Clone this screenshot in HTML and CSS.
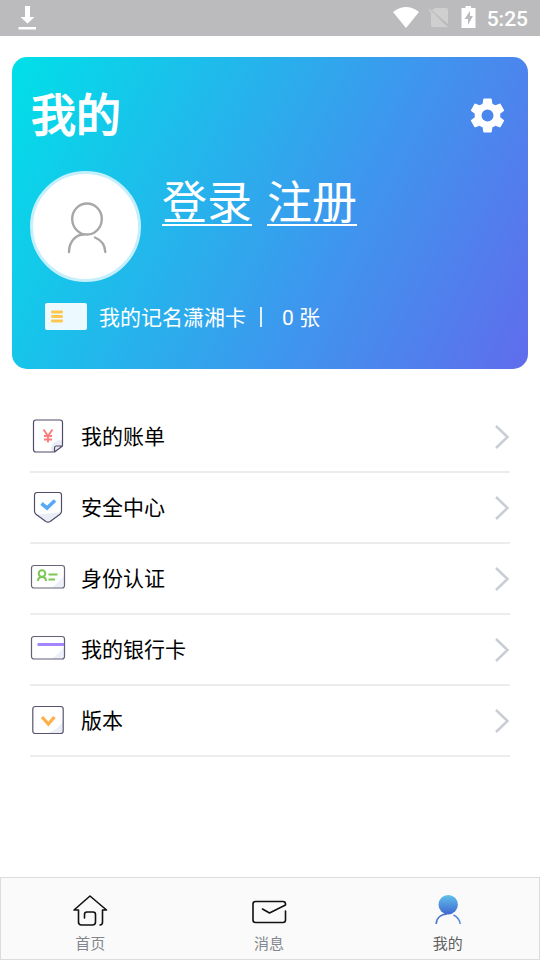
FILE: index.html
```html
<!DOCTYPE html>
<html lang="zh-CN">
<head>
<meta charset="utf-8">
<title>我的</title>
<link rel="stylesheet" href="styles.css">
</head>
<body>
<div class="screen">
  <header class="status">
    <svg class="status-download" width="20" height="26" viewBox="0 0 20 26"><path d="M7 1h5v11h4.500L9.500 18.500 2.500 12H7zM.5 22h17.500v2.500H.5z" fill="#fff"/></svg>
    <div class="status-right">
      <svg width="84" height="26" viewBox="0 0 84 26">
        <path d="M0 7Q13-3 26 7L13 23z" fill="#fff"/>
        <path d="M42 3h11a2 2 0 0 1 2 2v14L39 5.500zM38 7l15 15H40a2 2 0 0 1-2-2z" fill="#cfcfd0"/>
        <path d="M36 4.500l18 18" stroke="#d0d0d1" stroke-width="1.500"/>
        <path d="M72.500 1h5.500v2h4.500v20H68.500V3h4z" fill="#fff"/>
        <path d="M77 6l-5.500 8h3.500v6l5-9h-3z" fill="#bbbbbd"/>
      </svg>
      <span class="clock">5:25</span>
    </div>
  </header>

  <section class="card">
    <div class="card-head">
      <h1>我的</h1>
      <svg class="gear" width="41" height="41" viewBox="0 0 24 24"><path fill="#fff" d="M19.430 12.980c.04-.32.07-.64.07-.98s-.03-.66-.07-.98l2.110-1.650c.19-.15.24-.42.12-.64l-2-3.460c-.12-.22-.39-.3-.61-.22l-2.490 1c-.52-.4-1.080-.73-1.690-.98l-.38-2.650C14.460 2.180 14.250 2 14 2h-4c-.25 0-.46.18-.49.42l-.38 2.650c-.61.25-1.170.59-1.690.98l-2.490-1c-.23-.09-.49 0-.61.22l-2 3.460c-.13.22-.07.49.12.64l2.110 1.650c-.04.32-.07.65-.07.98s.03.66.07.98l-2.110 1.650c-.19.15-.24.42-.12.64l2 3.460c.12.22.39.3.61.22l2.490-1c.52.4 1.080.73 1.690.98l.38 2.650c.03.24.24.42.49.42h4c.25 0 .46-.18.49-.42l.38-2.650c.61-.25 1.170-.59 1.690-.98l2.490 1c.23.09.49 0 .61-.22l2-3.460c.12-.22.07-.49-.12-.64zM12 15.500a3.500 3.500 0 1 1 0-7 3.500 3.500 0 0 1 0 7z"/></svg>
    </div>
    <div class="profile">
      <div class="avatar">
        <svg width="40" height="52" viewBox="0 0 40 52" fill="none" stroke="#a7a7a7" stroke-width="2.400" stroke-linecap="round"><ellipse cx="20" cy="17" rx="14.800" ry="15.500"/><path d="M2 50C2 39.500 9 32.500 17 32.500M28 35.500C34 38 38 43 38.300 50"/></svg>
      </div>
      <div class="links"><a href="#">登录</a><a href="#">注册</a></div>
    </div>
    <div class="tickets">
      <svg width="42" height="27" viewBox="0 0 42 27"><rect width="42" height="27" rx="2" fill="#ecfaff"/><path d="M7.300 9h9.400M7.300 13.500h9.400M7.300 18h9.400" stroke="#ffc751" stroke-width="2.800" stroke-linecap="round"/></svg>
      <span class="ticket-name">我的记名潇湘卡</span><span class="bar"></span><span class="count">0 张</span>
    </div>
  </section>

  <ul class="menu">
    <li>
      <svg class="icon" width="36" height="36" viewBox="0 0 36 36" fill="none"><path d="M33 22a10 10 0 0 0-12 12h5l7-6z" fill="#e9edf6"/><path d="M32.500 27.500V4.500a2.500 2.500 0 0 0-2.500-2.500H6a2.500 2.500 0 0 0-2.500 2.500v27A2.500 2.500 0 0 0 6 34h18.500l8-6h-6a2 2 0 0 0-2 2v4" stroke="#514d69" stroke-width="1.200" stroke-linejoin="round"/><path d="M13.500 11.500l4.500 6.500 4.500-6.500M18 18v6.500M14 18h8M14 21.500h8" stroke="#fb7d7d" stroke-width="1.900"/></svg>
      <span>我的账单</span>
      <svg class="arrow" width="16" height="26" viewBox="0 0 16 26"><path d="M2 2l11.500 11L2 24" fill="none" stroke="#c9cdd4" stroke-width="2.500"/></svg>
    </li>
    <li>
      <svg class="icon" width="36" height="36" viewBox="0 0 36 36" fill="none"><path d="M5 26l27-3-3 4-9 5h-4z" fill="#e9edf6"/><path d="M7 3.500h22a2.500 2.500 0 0 1 2.500 2.500V22q0 2-1.500 3.200l-9.500 7q-2.500 2-5 0L6 25.200q-1.500-1.200-1.500-3.200V6A2.500 2.500 0 0 1 7 3.500z" stroke="#514d69" stroke-width="1.200"/><path d="M11.500 14.500l5.500 4.500 8-7.500" stroke="#57a9f6" stroke-width="3.600"/></svg>
      <span>安全中心</span>
      <svg class="arrow" width="16" height="26" viewBox="0 0 16 26"><path d="M2 2l11.500 11L2 24" fill="none" stroke="#c9cdd4" stroke-width="2.500"/></svg>
    </li>
    <li>
      <svg class="icon" width="36" height="36" viewBox="0 0 36 36" fill="none"><path d="M22 28L34 16v12z" fill="#edf0f8"/><rect x="1.500" y="5.500" width="33" height="22.500" rx="2.500" stroke="#686579" stroke-width="1.200"/><g stroke="#7cc653" stroke-width="2"><circle cx="12" cy="13.500" r="3.300"/><path d="M8 21q0-4 4-4t4 4M18.500 14.500h9M18.500 19.500h6.500"/></g></svg>
      <span>身份认证</span>
      <svg class="arrow" width="16" height="26" viewBox="0 0 16 26"><path d="M2 2l11.500 11L2 24" fill="none" stroke="#c9cdd4" stroke-width="2.500"/></svg>
    </li>
    <li>
      <svg class="icon" width="36" height="36" viewBox="0 0 36 36" fill="none"><path d="M22 28L34 17v11z" fill="#edf0f8"/><rect x="1.500" y="5.500" width="33" height="22.500" rx="2.500" stroke="#625f76" stroke-width="1.200"/><path d="M7.500 13.500H34" stroke="#a285ff" stroke-width="3"/></svg>
      <span>我的银行卡</span>
      <svg class="arrow" width="16" height="26" viewBox="0 0 16 26"><path d="M2 2l11.500 11L2 24" fill="none" stroke="#c9cdd4" stroke-width="2.500"/></svg>
    </li>
    <li>
      <svg class="icon" width="36" height="36" viewBox="0 0 36 36" fill="none"><path d="M18 31q10-3 15-12v12z" fill="#e9edf6"/><rect x="2.800" y="4.500" width="30.400" height="27" rx="2.500" stroke="#58546c" stroke-width="1.200"/><path d="M12 15l6.300 7 6.200-7" stroke="#ffb047" stroke-width="3.300"/></svg>
      <span>版本</span>
      <svg class="arrow" width="16" height="26" viewBox="0 0 16 26"><path d="M2 2l11.500 11L2 24" fill="none" stroke="#c9cdd4" stroke-width="2.500"/></svg>
    </li>
  </ul>

  <nav class="tabs">
    <div class="tab">
      <svg width="36" height="36" viewBox="0 0 36 36" fill="none" stroke="#111" stroke-width="1.600" stroke-linejoin="round" stroke-linecap="round"><path d="M28 32q2.500 0 2.500-3V17H34.500L18 3 2 17h4.500v12q0 3 3 3h11q3 0 3-3V21.500q0-2.500-2.500-2.500h-6q-2.500 0-2.500 2.500V25"/></svg>
      <span>首页</span>
    </div>
    <div class="tab">
      <svg width="36" height="36" viewBox="0 0 36 36" fill="none" stroke="#111" stroke-width="1.600" stroke-linejoin="round" stroke-linecap="round"><path d="M11.500 16l7 4L34.500 12V11q0-2.500-2.500-2.500H4.500Q2 8.500 2 11v16q0 2.500 2.500 2.500H32q2.500 0 2.500-2.500v-9"/></svg>
      <span>消息</span>
    </div>
    <div class="tab active">
      <svg width="36" height="36" viewBox="0 0 36 36" fill="none"><defs><linearGradient id="person" x1="0" y1="0" x2="0" y2="1"><stop offset="0" stop-color="#5fc1ec"/><stop offset="1" stop-color="#4167d0"/></linearGradient></defs><circle cx="18.200" cy="11.700" r="9.700" fill="url(#person)"/><path d="M6.200 31C6.200 25 11 21 17 21" stroke="#4a73d2" stroke-width="1.500"/><path d="M23.500 22q6 3 6.700 9" stroke="#528bdc" stroke-width="1.500"/></svg>
      <span>我的</span>
    </div>
  </nav>
</div>
</body>
</html>
```

FILE: styles.css
```css
* { box-sizing: border-box; }

body {
  margin: 0;
  background: #fff;
  color: #000;
  font-family: Roboto, "Noto Sans CJK SC", sans-serif;
}

svg { display: block; flex: none; }

.screen {
  display: flex;
  flex-direction: column;
  height: 960px;
  overflow: hidden;
}

.status {
  display: flex;
  justify-content: space-between;
  height: 36px;
  padding: 5px 12px 0 18px;
  background: #bbbbbd;
  color: #fff;
}

.status-right { display: flex; gap: 10px; }

.clock {
  font-size: 21px;
  font-weight: 500;
  line-height: 28px;
}

.card {
  height: 312px;
  margin: 21px 12px 0;
  padding: 24px 20px 0 18px;
  border-radius: 15px;
  background: linear-gradient(116deg, #00e0e8 0%, #3e96ee 62%, #606cec 100%);
  color: #fff;
}

.card-head {
  display: flex;
  justify-content: space-between;
  height: 90px;
}

h1 {
  margin: 3px 0 0 1px;
  font-size: 45px;
  font-weight: 400;
  line-height: 65px;
  -webkit-text-stroke: 1.5px #fff;
}

.gear { margin-top: 14px; }

.profile { display: flex; gap: 21px; }

.avatar {
  display: flex;
  align-items: center;
  justify-content: center;
  width: 111px;
  height: 111px;
  padding: 3px 0 0 2px;
  border: 3px solid #c5effb;
  border-radius: 50%;
  background: #fff;
}

.links {
  display: flex;
  gap: 15px;
  height: 65px;
  font-size: 45px;
  line-height: 65px;
}

.links a {
  color: #fff;
  text-decoration: underline;
  text-decoration-thickness: 2px;
  text-decoration-skip-ink: none;
  text-underline-offset: 5px;
}

.tickets {
  display: flex;
  align-items: center;
  height: 32px;
  margin: 18px 0 0 15px;
  font-size: 21px;
}

.ticket-name { margin-left: 12px; }

.bar {
  width: 2px;
  height: 20px;
  margin: 2px 20px 0 14px;
  background: #e4f1fc;
}

.menu {
  margin: 33px 30px 0;
  padding: 0;
  list-style: none;
}

.menu li {
  display: flex;
  align-items: center;
  height: 71px;
  border-bottom: 2px solid #ececec;
  font-size: 21px;
}

.menu .icon { margin: 0 15px 1px 0; }

.menu span { padding-bottom: 3px; }

.arrow { margin-left: auto; }

.tabs {
  display: grid;
  grid-template-columns: repeat(3, 1fr);
  height: 83px;
  padding-right: 2px;
  margin-top: auto;
  border: 1px solid #dcdcdc;
  background: #fafafa;
  color: #83878d;
  font-size: 15px;
}

.tab {
  display: flex;
  flex-direction: column;
  align-items: center;
  padding-top: 15px;
}

.tab span {
  margin-top: 4px;
  line-height: 22px;
}

.active { color: #606060; }
```
